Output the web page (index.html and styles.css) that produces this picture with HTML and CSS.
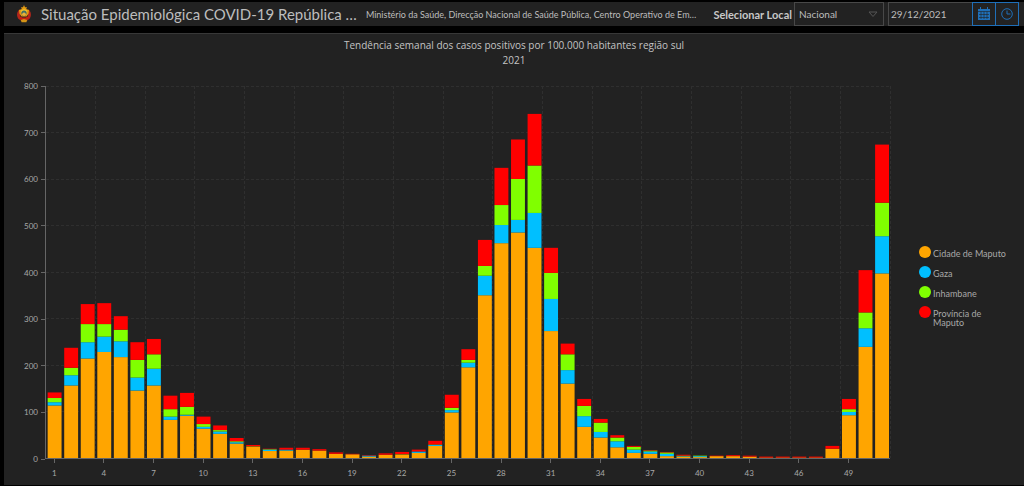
FILE: index.html
```html
<!DOCTYPE html>
<html lang="pt">
<head>
<meta charset="utf-8">
<meta name="viewport" content="width=device-width, initial-scale=1">
<title>Situação Epidemiológica COVID-19</title>
<link rel="stylesheet" href="styles.css">
</head>
<body>
<header class="topbar">
  <svg class="emblem" viewBox="0 0 16 18" aria-hidden="true">
    <path d="M3.500 4.500C.8 6.500.2 11 2.600 14l3.400 2.300h4L13.400 14c2.400-3 1.800-7.500-.9-9.500l-1 1.500.5 6-4 2-4-2 .5-6z" fill="#b3261b"/>
    <path d="M8 0l1 2.200 2 .1-.8 1.600L13 5l-.4 3.500-2 3H5.400l-2-3L3 5l2.800-1.100L5 2.300l2-.1z" fill="#e39a12"/>
    <path d="M4.500 5.500l3.500-1.500 3.500 1.500-1 2H5.500z" fill="#efc22c"/>
    <circle cx="8" cy="8" r="2.600" fill="#3f7168"/>
    <path d="M5.500 9.200L8 7.200l2.500 2-2.500 2z" fill="#e8b13a"/>
    <path d="M3 10.500l3 2h4l3-2-.5 2.500-3 2h-3l-3-2z" fill="#c8200f"/>
    <path d="M4.800 15l3.200-1 3.200 1-.8 2.300H5.600z" fill="#d49416"/>
  </svg>
  <h1 class="title">Situação Epidemiológica COVID-19 República …</h1>
  <p class="subtitle">Ministério da Saúde, Direcção Nacional de Saúde Pública, Centro Operativo de Em…</p>
  <form class="filters">
    <label class="filter-label" for="local">Selecionar Local</label>
    <div class="select-box">
      <select id="local" class="select"><option>Nacional</option></select>
      <svg class="arrow" viewBox="0 0 10 7" aria-hidden="true"><path d="M1 1h8L5 5.500z" fill="none" stroke="#555"/></svg>
    </div>
    <div class="date-box">
      <input class="date" type="text" value="29/12/2021" aria-label="Data">
      <button class="icon-button" type="button" aria-label="Calendário">
        <svg viewBox="0 0 14 14" aria-hidden="true">
          <path d="M1 2h12v11H1zM3 0h1v2H3zM10 0h1v2h-1z" fill="#1f6fb8"/>
          <path d="M1 4.500h12M2 7.500h10M2 10.500h10M4 4.500v7.500M7 4.500v7.500M10 4.500v7.500" stroke="#222" stroke-width=".6"/>
        </svg>
      </button>
      <button class="icon-button" type="button" aria-label="Hora">
        <svg viewBox="0 0 14 14" fill="none" stroke="#1f6fb8" aria-hidden="true"><circle cx="7" cy="7" r="5.300"/><path d="M7 3.500V7h3.500"/></svg>
      </button>
    </div>
  </form>
</header>
<main class="panel">
  <h2 class="chart-title">Tendência semanal dos casos positivos por 100.000 habitantes região sul<br>2021</h2>
  <div class="chart">
    <div class="y-axis" id="y-axis"></div>
    <div class="plot">
      <svg class="graph" id="graph" role="img" aria-label="Casos positivos por semana"></svg>
    </div>
    <ul class="legend">
      <li class="legend-item"><span class="dot maputo"></span>Cidade de Maputo</li>
      <li class="legend-item"><span class="dot gaza"></span>Gaza</li>
      <li class="legend-item"><span class="dot inhambane"></span>Inhambane</li>
      <li class="legend-item"><span class="dot provincia"></span>Província de Maputo</li>
    </ul>
    <div class="x-axis" id="x-axis"></div>
  </div>
</main>
<script src="chart.js"></script>
</body>
</html>
```
FILE: styles.css
```css
* { box-sizing: border-box; }

body {
  margin: 0;
  padding: 2px 0 1px 4px;
  min-height: 100vh;
  display: flex;
  flex-direction: column;
  background: #000;
  color: #bdbdbd;
  font-family: Lato, "Open Sans", sans-serif;
}

h1, h2, p, ul { margin: 0; padding: 0; font-weight: 400; }

.topbar {
  display: flex;
  align-items: center;
  background: #222;
  padding: 0 5px 0 12px;
  height: 24px;
  margin-bottom: 7px;
  white-space: nowrap;
}
.emblem { width: 16px; height: 18px; flex: none; margin-right: 9px; }
.title { font-size: 15px; line-height: 24px; flex: none; }
.subtitle {
  font-size: 9px;
  line-height: 24px;
  margin-left: 9px;
  padding-top: 2px;
  flex: 1;
  min-width: 0;
  overflow: hidden;
}

.filters { display: flex; align-items: center; height: 24px; flex: none; }
.filter-label { font-size: 11px; font-weight: 700; color: #c8c8c8; margin-right: 2px; }
.select-box { display: grid; align-items: center; width: 90px; height: 24px; margin-right: 4px; }
.select, .date {
  height: 24px;
  border: 1px solid #484848;
  border-radius: 0;
  background: #222;
  color: #bdbdbd;
  font-family: inherit;
  font-size: 10px;
}
.select { appearance: none; grid-area: 1 / 1; width: 100%; padding: 0 4px; }
.arrow { grid-area: 1 / 1; justify-self: end; width: 10px; height: 7px; margin-right: 6px; pointer-events: none; }
.date-box { display: flex; }
.date { width: 84px; padding: 0 2px; border-right: 0; }
.icon-button {
  display: grid;
  place-items: center;
  width: 24px;
  height: 24px;
  padding: 0;
  border: 1px solid #1f6fb8;
  background: #222;
}
.icon-button + .icon-button { margin-left: -1px; }
.icon-button svg { width: 14px; height: 14px; }

.panel {
  flex: 1;
  display: flex;
  flex-direction: column;
  background: #222;
  border-top: 1px solid #383838;
  padding-top: 4px;
}
.chart-title {
  font-family: "Open Sans", sans-serif;
  font-size: 10px;
  line-height: 15px;
  text-align: center;
  margin-bottom: 18px;
  color: #c4c4c4;
}

.chart {
  flex: 1;
  display: grid;
  grid-template-columns: 42px 1fr 134px;
  grid-template-rows: minmax(240px, 1fr) 26px;
}
.y-axis {
  display: flex;
  flex-direction: column;
  justify-content: space-between;
  border-right: 1px solid #666;
}
.y-tick {
  display: flex;
  align-items: center;
  justify-content: flex-end;
  gap: 3px;
  height: 0;
  font-size: 8px;
  color: #a8a8a8;
}
.y-tick::after { content: ""; width: 4px; height: 1px; background: #666; }

.plot { display: grid; min-width: 0; border-bottom: 1px solid #666; }
.graph { width: 100%; height: 100%; overflow: visible; }
.grid-line { stroke: #2f2f2f; stroke-dasharray: 3 2; shape-rendering: crispEdges; }

.maputo { background: #ffa500; fill: #ffa500; }
.gaza { background: #00bfff; fill: #00bfff; }
.inhambane { background: #80ff00; fill: #80ff00; }
.provincia { background: #f00; fill: #f00; }

.x-axis { grid-column: 2; display: flex; }
.x-tick {
  flex: 1;
  min-width: 0;
  display: flex;
  flex-direction: column;
  align-items: center;
  font-size: 8px;
  line-height: 12px;
  color: #a8a8a8;
}
.x-tick.labelled::before { content: ""; width: 1px; height: 4px; margin-bottom: 4px; background: #666; }

.legend {
  align-self: center;
  list-style: none;
  margin-left: 29px;
  padding-top: 28px;
  display: flex;
  flex-direction: column;
  gap: 8px;
  font-size: 9px;
  line-height: 9px;
  color: #a8a8a8;
}
.legend-item { display: flex; gap: 2px; padding: 3px 16px 0 0; }
.dot { flex: none; width: 12px; height: 12px; margin: -3px 0; border-radius: 50%; }
```
FILE: chart.js
```js
// Running totals per week: Cidade de Maputo, Gaza, Inhambane, Província de Maputo
const weeks = [
  [113,120,129,141],[156,178,194,237],[214,249,288,331],[228,261,288,333],[217,251,276,305],
  [145,173,211,249],[156,192,223,256],[82,89,105,134],[91,93,110,140],[63,67,73,89],
  [52,57,60,70],[31,34,36,43],[24,24,25,28],[15,18,19,20],[16,18,18,22],
  [18,18,18,22],[16,16,16,19],[9,9,9,12],[8,8,8,9],[3,5,5,6],
  [7,7,7,10],[7,7,8,13],[11,14,14,18],[26,28,29,37],[98,103,108,136],
  [195,205,211,234],[350,392,413,469],[462,501,544,624],[485,512,600,685],[452,527,629,740],
  [273,342,398,452],[160,189,223,246],[67,90,112,127],[44,56,76,84],[23,36,44,49],
  [11,18,24,26],[9,14,16,17],[4,9,12,13],[3,4,5,7],[2,4,5,5],
  [4,4,4,5],[4,4,4,6],[3,3,3,5],[1,1,1,3],[1,1,1,3],
  [1,1,1,3],[1,1,1,3],[20,20,20,26],[92,99,105,127],[239,279,313,404],[397,477,549,674]
];
const names = ["maputo", "gaza", "inhambane", "provincia"];
const max = 800;
const slot = 100 / weeks.length;

const add = (parent, className, text) => {
  const el = document.createElement("div");
  el.className = className;
  el.textContent = text;
  parent.append(el);
};
const line = (x1, y1, x2, y2) =>
  `<line class="grid-line" x1="${x1}%" y1="${y1}%" x2="${x2}%" y2="${y2}%"/>`;

const yAxis = document.getElementById("y-axis");
const xAxis = document.getElementById("x-axis");
let lines = "";
let bars = "";

for (let v = max; v >= 0; v -= 100) {
  const y = 100 - v / max * 100;
  add(yAxis, "y-tick", v);
  if (v > 0) lines += line(0, y, 100, y);
}
weeks.forEach((totals, i) => {
  totals.forEach((total, s) => {
    const value = total - (s ? totals[s - 1] : 0);
    bars += `<rect class="${names[s]}" x="${(i + 0.1) * slot}%" y="${100 - total / max * 100}%"` +
      ` width="${0.84 * slot}%" height="${value / max * 100}%"/>`;
  });
  const labelled = i % 3 === 0;
  add(xAxis, labelled ? "x-tick labelled" : "x-tick", labelled ? i + 1 : "");
  if (i % 3 === 2) lines += line((i + 1) * slot, 0, (i + 1) * slot, 100);
});
document.getElementById("graph").innerHTML = lines + bars;
```
